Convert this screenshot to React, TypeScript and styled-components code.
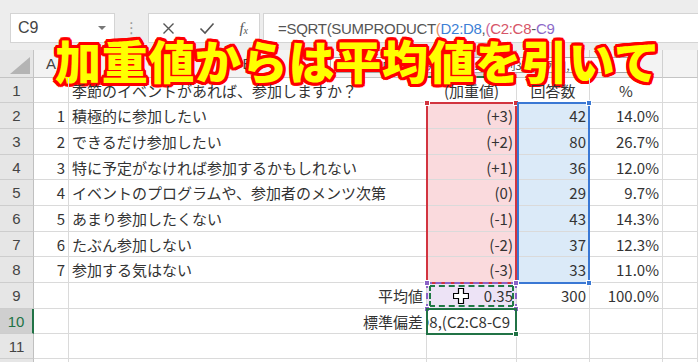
import React from "react";
import styled, { createGlobalStyle } from "styled-components";

const GlobalStyle = createGlobalStyle`
  html, body {
    margin: 0;
    padding: 0;
    background: #ffffff;
    overflow: hidden;
  }
  body {
    font-family: "Noto Sans CJK JP", "Noto Sans", sans-serif;
  }
`;

const answers = [
  { no: "1", label: "積極的に参加したい", weight: "(+3)", count: "42", pct: "14.0%" },
  { no: "2", label: "できるだけ参加したい", weight: "(+2)", count: "80", pct: "26.7%" },
  { no: "3", label: "特に予定がなければ参加するかもしれない", weight: "(+1)", count: "36", pct: "12.0%" },
  { no: "4", label: "イベントのプログラムや、参加者のメンツ次第", weight: "(0)", count: "29", pct: "9.7%" },
  { no: "5", label: "あまり参加したくない", weight: "(-1)", count: "43", pct: "14.3%" },
  { no: "6", label: "たぶん参加しない", weight: "(-2)", count: "37", pct: "12.3%" },
  { no: "7", label: "参加する気はない", weight: "(-3)", count: "33", pct: "11.0%" },
];

// F sits under the title / window edge, its letter is not visible
const columns = ["A", "B", "C", "D", "E", ""];

type Align = "left" | "right" | "center";

const justify = (a?: Align) =>
  a === "right" ? "flex-end" : a === "center" ? "center" : "flex-start";

const App = () => {
  const rowCount = 12;

  return (
    <Page>
      <GlobalStyle />
      <TopBar>
        <NameBox>
          <span>C9</span>
          <Caret />
        </NameBox>
        <Grip>⋮</Grip>
        <ButtonGroup>
          <BarIcon>
            <svg width="13" height="13" viewBox="0 0 13 13">
              <path d="M1.5 1.5 L11.5 11.5 M11.5 1.5 L1.5 11.5" stroke="#555" strokeWidth="1.4" />
            </svg>
          </BarIcon>
          <BarIcon>
            <svg width="16" height="13" viewBox="0 0 16 13">
              <path d="M1.5 6.5 L6 11 L14.5 1.5" stroke="#555" strokeWidth="1.6" fill="none" />
            </svg>
          </BarIcon>
          <FxIcon>
            f<sub>x</sub>
          </FxIcon>
        </ButtonGroup>
        <FormulaBox>
          <Ref $color="#555">=SQRT(SUMPRODUCT</Ref>
          <Ref $color="#e38b5c">(</Ref>
          <Ref $color="#3c7fd6">D2:D8</Ref>
          <Ref $color="#555">,</Ref>
          <Ref $color="#c9649c">(</Ref>
          <Ref $color="#d65568">C2:C8</Ref>
          <Ref $color="#555">-</Ref>
          <Ref $color="#8d69c8">C9</Ref>
        </FormulaBox>
      </TopBar>

      <Sheet>
        {/* range highlights behind the cells */}
        <RangeFill $r="3 / 10" $c="4 / 5" $bg="#fadadd" />
        <RangeFill $r="3 / 10" $c="5 / 6" $bg="#dbeaf8" />
        <RangeFill $r="10 / 11" $c="4 / 5" $bg="#ede3f6" />

        <Corner $r="1" $c="1">
          <svg width="20" height="17" viewBox="0 0 20 17">
            <polygon points="20,0 20,17 0,17" fill="#b4b4b4" />
          </svg>
        </Corner>
        {columns.map((c, i) => (
          <ColHeader key={i} $r="1" $c={String(i + 2)} $active={c === "C"}>
            {c}
          </ColHeader>
        ))}

        {Array.from({ length: rowCount }, (_, i) => (
          <RowHeader key={i} $r={String(i + 2)} $c="1" $active={i + 1 === 10}>
            {i + 1}
          </RowHeader>
        ))}

        {/* row 1 */}
        <Cell $r="2" $c="2" />
        <Cell $r="2" $c="3" $noRight>
          季節のイベントがあれば、参加しますか？
        </Cell>
        <Cell $r="2" $c="4" $align="center">
          (加重値)
        </Cell>
        <Cell $r="2" $c="5" $align="center">
          回答数
        </Cell>
        <Cell $r="2" $c="6" $align="center">
          %
        </Cell>
        <Cell $r="2" $c="7" />

        {answers.map((a, i) => {
          const r = String(i + 3);
          return (
            <React.Fragment key={a.no}>
              <Cell $r={r} $c="2" $align="right">
                {a.no}
              </Cell>
              <Cell $r={r} $c="3">
                {a.label}
              </Cell>
              <Cell $r={r} $c="4" $align="right">
                {a.weight}
              </Cell>
              <Cell $r={r} $c="5" $align="right">
                {a.count}
              </Cell>
              <Cell $r={r} $c="6" $align="right">
                {a.pct}
              </Cell>
              <Cell $r={r} $c="7" />
            </React.Fragment>
          );
        })}

        {/* row 9 */}
        <Cell $r="10" $c="2" />
        <Cell $r="10" $c="3" $align="right">
          平均値
        </Cell>
        <Cell $r="10" $c="4" $align="right">
          0.35
        </Cell>
        <Cell $r="10" $c="5" $align="right">
          300
        </Cell>
        <Cell $r="10" $c="6" $align="right">
          100.0%
        </Cell>
        <Cell $r="10" $c="7" />

        {/* row 10 */}
        <Cell $r="11" $c="2" />
        <Cell $r="11" $c="3" $align="right">
          標準偏差
        </Cell>
        <EditCell $r="11" $c="4">
          <span>=SQRT(SUMPRODUCT(D2:D8,(C2:C8-C9</span>
        </EditCell>
        <Cell $r="11" $c="5" />
        <Cell $r="11" $c="6" />
        <Cell $r="11" $c="7" />

        {[12, 13].map((r) =>
          columns.map((_, i) => <Cell key={`${r}-${i}`} $r={String(r)} $c={String(i + 2)} />)
        )}

        {/* range frames over the cells */}
        <RangeFrame $r="3 / 10" $c="4 / 5" $color="#d2343f" $shift={-1}>
          <Handle $color="#d2343f" $v="top" $h="left" />
          <Handle $color="#d2343f" $v="top" $h="right" />
          <Handle $color="#d2343f" $v="bottom" $h="left" />
          <Handle $color="#d2343f" $v="bottom" $h="right" />
        </RangeFrame>
        <RangeFrame $r="3 / 10" $c="5 / 6" $color="#3a78d4" $shift={0}>
          <Handle $color="#3a78d4" $v="top" $h="right" />
          <Handle $color="#3a78d4" $v="bottom" $h="right" />
        </RangeFrame>
        <RangeFrame $r="10 / 11" $c="4 / 5" $color="#8a62c6" $shift={-1} $dashed>
          <Ants />
          <Handle $color="#8a62c6" $v="top" $h="left" />
          <Handle $color="#8a62c6" $v="top" $h="right" />
          <Handle $color="#8a62c6" $v="bottom" $h="left" />
          <Handle $color="#8a62c6" $v="bottom" $h="right" />
          <Pointer>
            <svg width="16" height="16" viewBox="0 0 16 16">
              <path
                d="M5.5 0.5 H10.5 V5.5 H15.5 V10.5 H10.5 V15.5 H5.5 V10.5 H0.5 V5.5 H5.5 Z"
                fill="#fff"
                stroke="#000"
                strokeWidth="1.2"
              />
            </svg>
          </Pointer>
        </RangeFrame>
        <RangeFrame $r="11 / 12" $c="4 / 5" $color="#217346" $shift={-1}>
          <Handle $color="#217346" $v="bottom" $h="right" />
        </RangeFrame>
      </Sheet>

      <Tooltip>SUMPRODUCT(配列1, [配列2], [配列3], [配列4], ...)</Tooltip>
      <Title>加重値からは平均値を引いて</Title>
    </Page>
  );
};

export default App;

const Page = styled.div`
  position: relative;
  width: 698px;
  height: 362px;
  overflow: hidden;
  background: #ffffff;
`;

const TopBar = styled.div`
  height: 50px;
  box-sizing: border-box;
  padding: 13px 0 0 10px;
  background: #ededed;
  display: flex;
  align-items: flex-start;
`;

const BarBox = styled.div`
  height: 30px;
  box-sizing: border-box;
  background: #ffffff;
  border: 1px solid #d4d4d4;
  display: flex;
  align-items: center;
`;

const NameBox = styled(BarBox)`
  width: 105px;
  padding: 0 8px 0 7px;
  justify-content: space-between;
  font: 16px "Liberation Sans", Arial, sans-serif;
  color: #444;
`;

const Caret = styled.div`
  width: 0;
  height: 0;
  border-left: 4px solid transparent;
  border-right: 4px solid transparent;
  border-top: 4px solid #777;
`;

const Grip = styled.div`
  width: 33px;
  height: 30px;
  display: flex;
  align-items: center;
  justify-content: center;
  color: #9a9a9a;
  font: 15px "DejaVu Sans", sans-serif;
`;

const ButtonGroup = styled(BarBox)`
  width: 112px;
  justify-content: space-between;
  padding: 0 11px 0 13px;
`;

const BarIcon = styled.span`
  display: flex;
  align-items: center;
`;

const FxIcon = styled.span`
  font: italic 15px "Liberation Serif", serif;
  color: #555;
  sub {
    font-size: 10px;
    vertical-align: -1px;
  }
`;

const FormulaBox = styled(BarBox)`
  flex: 1;
  margin-left: 3px;
  border-right: none;
  padding-left: 14px;
  font: 15px "Liberation Sans", Arial, sans-serif;
  letter-spacing: -0.3px;
  white-space: pre;
`;

const Ref = styled.span<{ $color: string }>`
  color: ${(p) => p.$color};
`;

const Sheet = styled.div`
  display: grid;
  grid-template-columns: 34px 35px 358px 90px 73px 73px 35px;
  grid-template-rows: 28px 25px 26px 26px 25px 26px 26px 25px 26px 26px 25px 25px 30px;
  background: #ffffff;
`;

type Placed = { $r: string; $c: string };

const GridItem = styled.div<Placed>`
  grid-row: ${(p) => p.$r};
  grid-column: ${(p) => p.$c};
  box-sizing: border-box;
  min-width: 0;
`;

const Corner = styled(GridItem)`
  background: #e6e6e6;
  border-right: 1px solid #c4c4c4;
  border-bottom: 1px solid #c4c4c4;
  display: flex;
  align-items: flex-end;
  justify-content: flex-end;
  padding: 0 3px 3px 0;
`;

const ColHeader = styled(GridItem)<{ $active?: boolean }>`
  background: ${(p) => (p.$active ? "#d8d8d8" : "#f3f3f3")};
  border-right: 1px solid #d0d0d0;
  border-bottom: ${(p) => (p.$active ? "2px solid #217346" : "1px solid #c4c4c4")};
  display: flex;
  align-items: center;
  justify-content: center;
  font: 15px "Liberation Sans", Arial, sans-serif;
  color: #444;
`;

const RowHeader = styled(GridItem)<{ $active?: boolean }>`
  background: ${(p) => (p.$active ? "#cfcfcf" : "#e6e6e6")};
  border-right: ${(p) => (p.$active ? "2px solid #217346" : "1px solid #c0c0c0")};
  border-bottom: 1px solid #cdcdcd;
  display: flex;
  align-items: center;
  justify-content: center;
  font: 15px "Liberation Sans", Arial, sans-serif;
  color: ${(p) => (p.$active ? "#217346" : "#444")};
`;

const Cell = styled(GridItem)<{ $align?: Align; $noRight?: boolean }>`
  z-index: 1;
  display: flex;
  align-items: center;
  justify-content: ${(p) => justify(p.$align)};
  padding: 0 3px;
  border-right: 1px solid ${(p) => (p.$noRight ? "transparent" : "#dadada")};
  border-bottom: 1px solid #dadada;
  font-size: 15px;
  color: #333;
  white-space: nowrap;
`;

const EditCell = styled(Cell)`
  overflow: hidden;
  justify-content: flex-end;
  padding-right: 6px;
`;

const RangeFill = styled(GridItem)<{ $bg: string }>`
  z-index: 0;
  background: ${(p) => p.$bg};
`;

const RangeFrame = styled(GridItem)<{ $color: string; $shift: number; $dashed?: boolean }>`
  z-index: 2;
  position: relative;
  pointer-events: none;
  margin: -1px 0 -1px ${(p) => p.$shift}px;
  border: 2px ${(p) => (p.$dashed ? "dashed" : "solid")} ${(p) => p.$color};
`;

const Handle = styled.div<{ $color: string; $v: "top" | "bottom"; $h: "left" | "right" }>`
  position: absolute;
  width: 6px;
  height: 6px;
  background: ${(p) => p.$color};
  border: 1px solid #ffffff;
  box-sizing: border-box;
  ${(p) => p.$v}: -4px;
  ${(p) => p.$h}: -4px;
`;

const Ants = styled.div`
  position: absolute;
  inset: 1px;
  border: 2px dashed #1f7a45;
`;

const Pointer = styled.div`
  position: absolute;
  left: 25px;
  top: 4px;
  display: flex;
`;

const Tooltip = styled.div`
  position: absolute;
  left: 330px;
  top: 57px;
  width: 307px;
  height: 16px;
  box-sizing: border-box;
  padding: 0 6px;
  background: #ffffff;
  border: 1px solid #a8a8a8;
  font: 11px "Noto Sans CJK JP", sans-serif;
  line-height: 14px;
  color: #444;
  white-space: nowrap;
  overflow: hidden;
`;

const Title = styled.div`
  position: absolute;
  left: 55px;
  top: 36px;
  font: 900 46px/46px "Noto Sans CJK JP", sans-serif;
  letter-spacing: 0.7px;
  color: #ffff00;
  white-space: nowrap;
  text-shadow:
    3px 0 0 #ff0000, -3px 0 0 #ff0000, 0 3px 0 #ff0000, 0 -3px 0 #ff0000,
    2px 2px 0 #ff0000, -2px 2px 0 #ff0000, 2px -2px 0 #ff0000, -2px -2px 0 #ff0000,
    3px 1.5px 0 #ff0000, -3px 1.5px 0 #ff0000, 3px -1.5px 0 #ff0000, -3px -1.5px 0 #ff0000,
    1.5px 3px 0 #ff0000, -1.5px 3px 0 #ff0000, 1.5px -3px 0 #ff0000, -1.5px -3px 0 #ff0000;
`;
